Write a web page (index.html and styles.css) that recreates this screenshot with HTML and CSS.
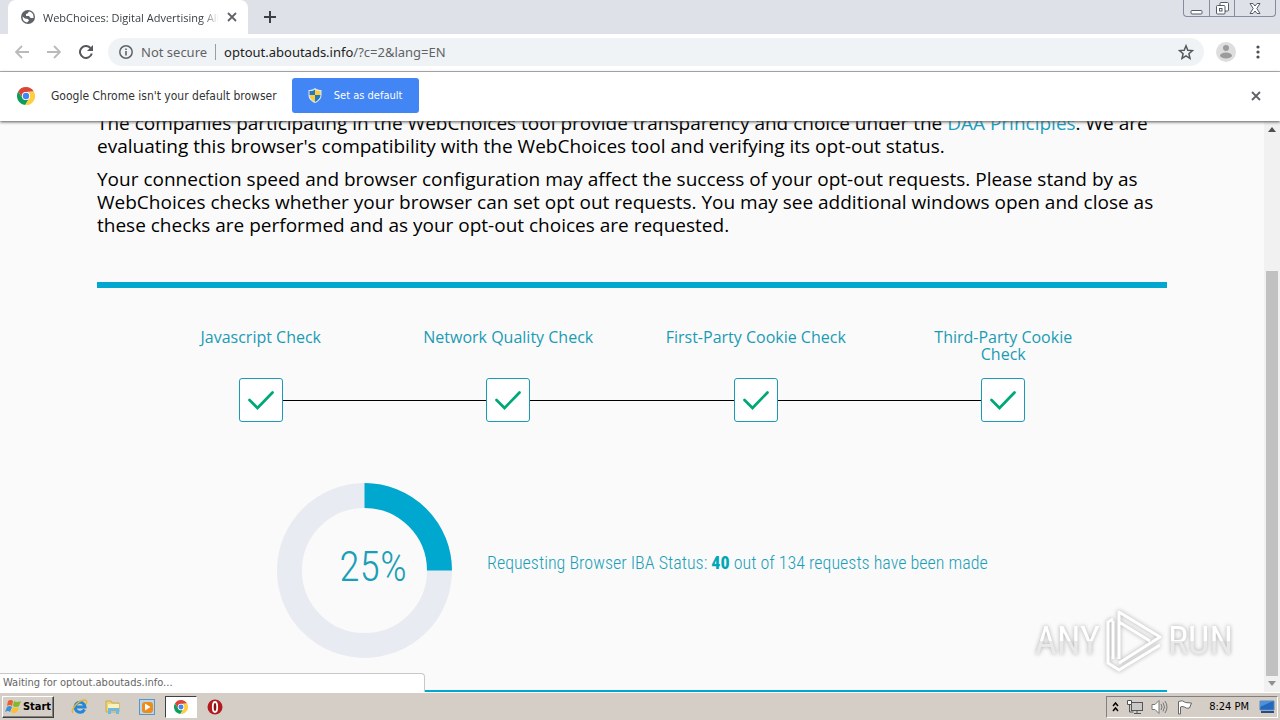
FILE: index.html
```html
<!DOCTYPE html>
<html lang="en">
<head>
<meta charset="utf-8">
<title>WebChoices: Digital Advertising Alliance</title>
<link rel="stylesheet" href="styles.css">
</head>
<body>
<svg class="defs" aria-hidden="true">
  <symbol id="chrome" viewBox="0 0 18 18">
    <path d="M1.2 4.5A9 9 0 0 1 16.8 4.6L9 5A4 4 0 0 0 5.3 10.5z" fill="#db4437"/>
    <path d="M1.2 4.5A9 9 0 0 0 8.2 18L12.5 11A4 4 0 0 1 5.4 10.8z" fill="#0f9d58"/>
    <path d="M16.8 4.6A9 9 0 0 1 8.2 18L12.5 11A4 4 0 0 0 9 5z" fill="#ffcd40"/>
    <circle cx="9" cy="9" r="4.1" fill="#fff"/><circle cx="9" cy="9" r="3.2" fill="#4285f4"/>
  </symbol>
  <symbol id="cross" viewBox="0 0 10 10"><path d="M1 1l8 8M9 1l-8 8" stroke="currentColor" stroke-width="1.8"/></symbol>
  <symbol id="check" viewBox="0 0 26 20"><path d="M1.500 10l8 8L24.500 2.500" fill="none" stroke="#00a878" stroke-width="2.700" stroke-linecap="round"/></symbol>
</svg>

<header class="tabs">
  <div class="tab-edge"></div>
  <div class="tab">
    <svg width="14" height="14" viewBox="0 0 14 14"><circle cx="7" cy="7" r="7" fill="#5f6368"/><path d="M1.500 6.500L4 8.500l3 .5 1 1.500-2 2C3 12 1.500 10 1.500 6.500zM8 1.500L6.500 3.500 5 4v2h3l1.500 2h3C12.800 4 11 2 8 1.500z" fill="#fff"/></svg>
    <span class="tab-title">WebChoices: Digital Advertising Alliance</span>
    <button class="icon" aria-label="Close tab"><svg width="10" height="10"><use href="#cross"/></svg></button>
  </div>
  <button class="icon new-tab" aria-label="New tab"><svg width="12" height="12" viewBox="0 0 12 12"><path d="M6 0v12M0 6h12" stroke="#3c4043" stroke-width="2"/></svg></button>
  <div class="window-buttons">
    <button aria-label="Minimize"><svg width="13" height="13" viewBox="0 0 13 13"><rect x="1" y="8.500" width="11" height="3.500" rx="1" fill="#fff" stroke="#555b66"/></svg></button>
    <button aria-label="Restore"><svg width="13" height="13" viewBox="0 0 13 13"><g fill="#fff" stroke="#555b66"><rect x="4" y=".5" width="8.500" height="8.500" rx="1"/><rect x=".5" y="3.500" width="8.500" height="8.500" rx="1"/><rect x="3.500" y="6.500" width="2.500" height="2.500"/></g></svg></button>
    <button class="wide" aria-label="Close"><svg width="12" height="11" viewBox="0 0 12 11"><path d="M1 .5h3l2 2.500 2-2.500h3L7.800 5.500l3.200 5H8L6 8l-2 2.500H1l3.200-5z" fill="#fff" stroke="#555b66"/></svg></button>
  </div>
</header>

<nav class="toolbar">
  <button class="icon" aria-label="Back"><svg width="14" height="14" viewBox="0 0 14 14"><path d="M14 7H1M7 1L1 7l6 6" fill="none" stroke="#bababa" stroke-width="1.800"/></svg></button>
  <button class="icon" aria-label="Forward"><svg width="14" height="14" viewBox="0 0 14 14"><path d="M0 7h13M7 1l6 6-6 6" fill="none" stroke="#bababa" stroke-width="1.800"/></svg></button>
  <button class="icon" aria-label="Reload"><svg width="14" height="14" viewBox="0 0 14 14"><path d="M11.500 3A6 6 0 1 0 12.800 8.500" fill="none" stroke="#55585c" stroke-width="2"/><path d="M14 0v6H8z" fill="#55585c"/></svg></button>
  <div class="address">
    <svg width="14" height="14" viewBox="0 0 14 14"><circle cx="7" cy="7" r="6.200" fill="none" stroke="#5f6368" stroke-width="1.500"/><path d="M7 6v4.500M7 3.500V5" stroke="#5f6368" stroke-width="1.600"/></svg>
    <span class="insecure">Not secure</span>
    <span class="url"><b>optout.aboutads.info</b>/?c=2&amp;lang=EN</span>
    <button class="icon" aria-label="Bookmark"><svg width="16" height="16" viewBox="0 0 16 16"><path d="M8 1.800l1.800 4.400 4.700.4-3.600 3.100 1.100 4.600L8 11.800l-4 2.500 1.100-4.600L1.500 6.600l4.700-.4z" fill="none" stroke="#55585c" stroke-width="1.500"/></svg></button>
  </div>
  <button class="icon" aria-label="Profile"><svg width="20" height="20" viewBox="0 0 20 20"><circle cx="10" cy="10" r="10" fill="#dedede"/><circle cx="10" cy="6" r="3" fill="#9c9c9c"/><ellipse cx="10" cy="13.500" rx="6" ry="3" fill="#9c9c9c"/></svg></button>
  <button class="icon" aria-label="Menu"><svg width="4" height="14" viewBox="0 0 4 14"><g fill="#4c4f53"><circle cx="2" cy="2" r="1.600"/><circle cx="2" cy="7" r="1.600"/><circle cx="2" cy="12" r="1.600"/></g></svg></button>
</nav>

<aside class="infobar">
  <svg width="18" height="18"><use href="#chrome"/></svg>
  <span>Google Chrome isn't your default browser</span>
  <button class="default-button"><svg width="14" height="15" viewBox="0 0 14 15"><path d="M7 0C5 1.500 3 2 .5 2v5c0 4 3 6.500 6.500 8 3.500-1.500 6.500-4 6.500-8V2C11 2 9 1.500 7 0z" fill="#dce8f5"/><path d="M7 1.500V7H1.500V3C4 3 5.500 2.500 7 1.500zM7 7h5.500c0 3-2.500 5.500-5.500 7z" fill="#2378c4"/><path d="M7 1.500V7h5.500V3C10 3 8.500 2.500 7 1.500zM7 7H1.500c0 3 2.500 5.500 5.500 7z" fill="#fc3"/></svg>Set as default</button>
  <button class="icon dismiss" aria-label="Dismiss"><svg width="10" height="10"><use href="#cross"/></svg></button>
</aside>

<div class="viewport">
  <main class="page">
    <div class="content">
      <p>The companies participating in the WebChoices tool provide transparency and choice under the <a href="#">DAA Principles</a>. We are evaluating this browser's compatibility with the WebChoices tool and verifying its opt-out status.</p>
      <p>Your connection speed and browser configuration may affect the success of your opt-out requests. Please stand by as WebChoices checks whether your browser can set opt out requests. You may see additional windows open and close as these checks are performed and as your opt-out choices are requested.</p>
      <hr class="rule">
      <ol class="steps">
        <li><span class="label">Javascript Check</span><span class="box"><svg width="26" height="20"><use href="#check"/></svg></span></li>
        <li><span class="label">Network Quality Check</span><span class="box"><svg width="26" height="20"><use href="#check"/></svg></span></li>
        <li><span class="label">First-Party Cookie Check</span><span class="box"><svg width="26" height="20"><use href="#check"/></svg></span></li>
        <li><span class="label">Third-Party Cookie<br>Check</span><span class="box"><svg width="26" height="20"><use href="#check"/></svg></span></li>
      </ol>
      <section class="progress">
        <div class="donut">
          <svg width="175" height="175" viewBox="0 0 175 175"><circle cx="87.500" cy="87.500" r="75" fill="none" stroke="#e8ebf2" stroke-width="25"/><path d="M87.500 12.500A75 75 0 0 1 162.500 87.500" fill="none" stroke="#00a7cf" stroke-width="25"/></svg>
          <span class="percent">25%</span>
        </div>
        <p class="status">Requesting Browser IBA Status: <b>40</b> out of 134 requests have been made</p>
      </section>
      <hr class="rule">
    </div>
  </main>
  <div class="scrollbar"><i class="up"></i><i class="thumb"></i><i class="down"></i></div>
  <div class="bubble">Waiting for optout.aboutads.info...</div>
  <div class="watermark"><span>ANY</span><svg width="58" height="64" viewBox="0 0 58 64"><path d="M14 50V3L55 28L14 54M14 13L45 32M8 10L3 13V54L14 61L55 36M8 12V50" fill="none" stroke="#fff" stroke-width="3" stroke-linejoin="round"/></svg><span>RUN</span></div>
</div>

<footer class="taskbar">
  <button class="start"><svg width="17" height="16" viewBox="0 0 17 16"><path d="M3 2q3-2 5 0L7 7Q5 5 2 7z" fill="#e8602c"/><path d="M9 2q3 2 7 0l-2 5q-3 2-6 0z" fill="#7fba28"/><path d="M2 8q3-2 5 0l-2 5q-2-2-5 0z" fill="#3c8fd8"/><path d="M8 8q3 2 6 0l-2 5q-3 2-6 0z" fill="#fbc02a"/></svg>Start</button>
  <button class="task" aria-label="Internet Explorer"><svg width="17" height="16" viewBox="0 0 17 16"><path d="M13.500 10.500A5 5 0 1 1 14 8H5" fill="none" stroke="#2487d8" stroke-width="3"/><path d="M2 14C-1 12 6 2 13 1q4 0 2 4" fill="none" stroke="#e9b52c" stroke-width="1.500"/></svg></button>
  <button class="task" aria-label="Explorer"><svg width="16" height="16" viewBox="0 0 16 16"><path d="M1 2h5l1 2h7v9H1z" fill="#eed477" stroke="#c9ac4d"/><path d="M3 5h11v4H3z" fill="#faf1bb"/><path d="M3 14V9h11v6h-3v-3H6v3H3z" fill="#6db9e4"/></svg></button>
  <button class="task" aria-label="Media Player"><svg width="16" height="16" viewBox="0 0 16 16"><rect x=".5" y=".5" width="15" height="15" fill="#b7d7ef" stroke="#5e94c0"/><rect x="3" y="3" width="11" height="11" rx="3" fill="#f18b18"/><path d="M6 4.500v7l5.500-3.500z" fill="#fff"/></svg></button>
  <button class="task active" aria-label="Chrome"><svg width="14" height="14"><use href="#chrome"/></svg></button>
  <button class="task" aria-label="Opera"><svg width="16" height="16" viewBox="0 0 16 16"><circle cx="8" cy="8" r="7.500" fill="#b3191d"/><ellipse cx="8" cy="8" rx="2.200" ry="5" fill="#8b1014" stroke="#fff" stroke-width="1.800"/></svg></button>
  <div class="tray">
    <svg width="7" height="10" viewBox="0 0 7 10"><path d="M1 4l2.500-3L6 4M1 9l2.500-3L6 9" fill="none" stroke="#000" stroke-width="1.500"/></svg>
    <svg width="16" height="16" viewBox="0 0 16 16"><rect x="4.500" y="3.500" width="11" height="8" fill="#c9c9c9" stroke="#555"/><path d="M7 14.500h7M10 12v2M2.500 5v8h4" stroke="#555" fill="none"/><path d="M.5 1.500h4v4h-4z" fill="#fff" stroke="#555"/></svg>
    <svg width="17" height="16" viewBox="0 0 17 16"><path d="M1 5.500h3l4-4v13l-4-4H1z" fill="#fff" stroke="#777"/><path d="M10 5q2 3 0 6M12 3.500q3 4.500 0 9M14 2q4 6 0 12" fill="none" stroke="#777"/></svg>
    <svg width="17" height="16" viewBox="0 0 17 16"><path d="M2.500 2.500q4-2 7 1l6 .5-2 5q-3 1-5-1-3-1-4 0V15h-2z" fill="#fff" stroke="#666"/></svg>
    <time>8:24 PM</time>
    <svg width="16" height="14" viewBox="0 0 16 14"><path d="M1 1h14v9H1z" fill="#2268bd" stroke="#5b84b8"/><path d="M1 1h13L1 7z" fill="#4e91d8"/><path d="M2 12h13" stroke="#294d80" stroke-width="2"/></svg>
  </div>
</footer>
</body>
</html>
```
FILE: styles.css
```css
* { box-sizing: border-box; }
body { margin: 0; height: 100vh; display: flex; flex-direction: column; overflow: hidden; background: #fff; color: #333; font: 11px "DejaVu Sans Condensed", "Noto Sans", sans-serif; }
button { font: inherit; color: inherit; border: 0; padding: 0; background: none; display: flex; align-items: center; justify-content: center; }
svg { display: block; flex: none; }
.defs { position: absolute; width: 0; height: 0; }

.tabs { display: flex; height: 34px; flex: none; background: #dee1e8; }
.tab-edge { width: 8px; }
.tab { display: flex; align-items: center; width: 240px; gap: 8px; padding: 0 11px 0 13px; background: #fff; border-radius: 8px 8px 0 0; color: #3c4043; }
.tab-title { flex: 1; overflow: hidden; white-space: nowrap; font: 11px "Open Sans", sans-serif; mask-image: linear-gradient(90deg, #000 90%, transparent); }
.tab .icon { color: #5f6368; }
.new-tab { width: 44px; }
.window-buttons { display: flex; margin: 0 4px 0 auto; height: 17px; border: 1px solid #858c9b; border-top: 0; border-radius: 0 0 4px 4px; }
.window-buttons button { width: 25px; }
.window-buttons button + button { border-left: 1px solid #858c9b; }
.window-buttons .wide { width: 41px; }

.toolbar { display: flex; align-items: center; height: 38px; flex: none; gap: 18px; padding: 0 20px 0 15px; border-bottom: 1px solid #b0b2b5; }
.toolbar > .icon, .address { margin-bottom: 1px; }
.toolbar > .icon:last-child { margin-left: 2px; }
.address { display: flex; align-items: center; flex: 1; height: 28px; margin-left: -3px; margin-right: -6px; padding: 0 10px 0 11px; gap: 8px; border-radius: 14px; background: #f0f3f5; color: #5f6368; font: 13px "Noto Sans", sans-serif; }
.insecure { padding-right: 8px; border-right: 1px solid #9a9da1; line-height: 16px; }
.url { flex: 1; }
.url b { font-weight: 400; color: #202124; }

.infobar { display: flex; align-items: center; height: 49px; flex: none; padding: 0 19px 2px 17px; font-size: 12px; z-index: 1; background: #fff; box-shadow: 0 1px 3px #555; }
.infobar span { margin: 0 15px 0 16px; }
.default-button { width: 127px; height: 35px; gap: 12px; border-radius: 3px; background: #4285f4; color: #fff; font-size: 11px; }
.dismiss { margin-left: auto; color: #5f6368; }

.viewport { position: relative; display: flex; flex: 1; min-height: 0; overflow: hidden; background: #fafafa; }
.page { flex: 1; min-width: 0; overflow: hidden; }
.content { max-width: 1070px; margin: -9px auto 0; color: #000; font: 19px/23px "Open Sans", sans-serif; }
.content p { margin: 0 0 10px; }
.content a { color: #1a9fc0; text-decoration: none; }
.rule { height: 6px; margin: 0; border: 0; background: #00a7cf; }
.content p + .rule { margin-top: 45px; }
.steps { display: flex; margin: 41px 40px 0; padding: 0; list-style: none; }
.steps li { position: relative; flex: 1; display: flex; flex-direction: column; align-items: center; justify-content: space-between; height: 93px; }
.label { color: #1a9ab5; font-size: 16px; line-height: 17px; text-align: center; }
.box { position: relative; z-index: 1; display: flex; align-items: center; justify-content: center; width: 44px; height: 44px; border: 1px solid #1a9ab5; border-radius: 3px; background: #fff; }
.steps li + li::before { content: ""; position: absolute; right: 50%; bottom: 21px; width: 100%; height: 1px; background: #000; }
.progress { display: flex; align-items: center; gap: 35px; margin: 61px 0 32px 180px; color: #1a9fb8; font-family: "Roboto Condensed", Roboto, sans-serif; font-weight: 300; }
.donut { position: relative; }
.percent { position: absolute; inset: 0 0 8px 17px; display: flex; align-items: center; justify-content: center; font-size: 42px; }
.content .status { margin: 0 0 16px; font-size: 18px; }
.status b { color: #00a7b8; font-weight: 800; }

.scrollbar { display: flex; flex-direction: column; align-items: center; width: 16px; background: #f1f1f1; padding: 6px 0; }
.scrollbar .up, .scrollbar .down { border: 4px solid transparent; }
.scrollbar .up { border-top: 0; border-bottom: 5px solid #505050; }
.scrollbar .down { border-bottom: 0; border-top: 5px solid #909090; margin-top: 5px; }
.thumb { width: 12px; height: 405px; margin-top: auto; background: #c1c1c1; }
.bubble { position: absolute; left: 0; bottom: 0; width: 425px; height: 19px; padding: 0 3px; line-height: 18px; border: 1px solid #c8c8c8; border-left: 0; border-bottom: 0; border-top-right-radius: 4px; background: #fff; color: #666; }
.watermark { position: absolute; right: 47px; bottom: 19px; display: flex; align-items: center; gap: 5px; color: transparent; font: 38px "Roboto Condensed", Roboto, sans-serif; filter: drop-shadow(0 0 2px #aaa); }
.watermark span { background: linear-gradient(#fff 50%, #e9e9e9 50%); background-clip: text; }

.taskbar { display: flex; align-items: center; height: 28px; flex: none; padding: 1px 2px; border-top: 1px solid #fff; background: #d4cec6; color: #000; }
.start { width: 52px; height: 22px; gap: 1px; margin-right: 9px; border: 1px solid; border-color: #fff #404040 #404040 #fff; box-shadow: inset -1px -1px #808080; font-weight: 700; font-size: 11px; }
.task { width: 32px; height: 22px; margin-right: 2px; }
.task.active { background: #fff; border: 1px solid; border-color: #404040 #fff #fff #404040; }
.tray { display: flex; align-items: center; gap: 8px; height: 22px; margin-left: auto; padding: 0 2px 0 5px; border: 1px solid; border-color: #808080 #fff #fff #808080; }
.tray time { margin: 0 2px 0 8px; }
```
